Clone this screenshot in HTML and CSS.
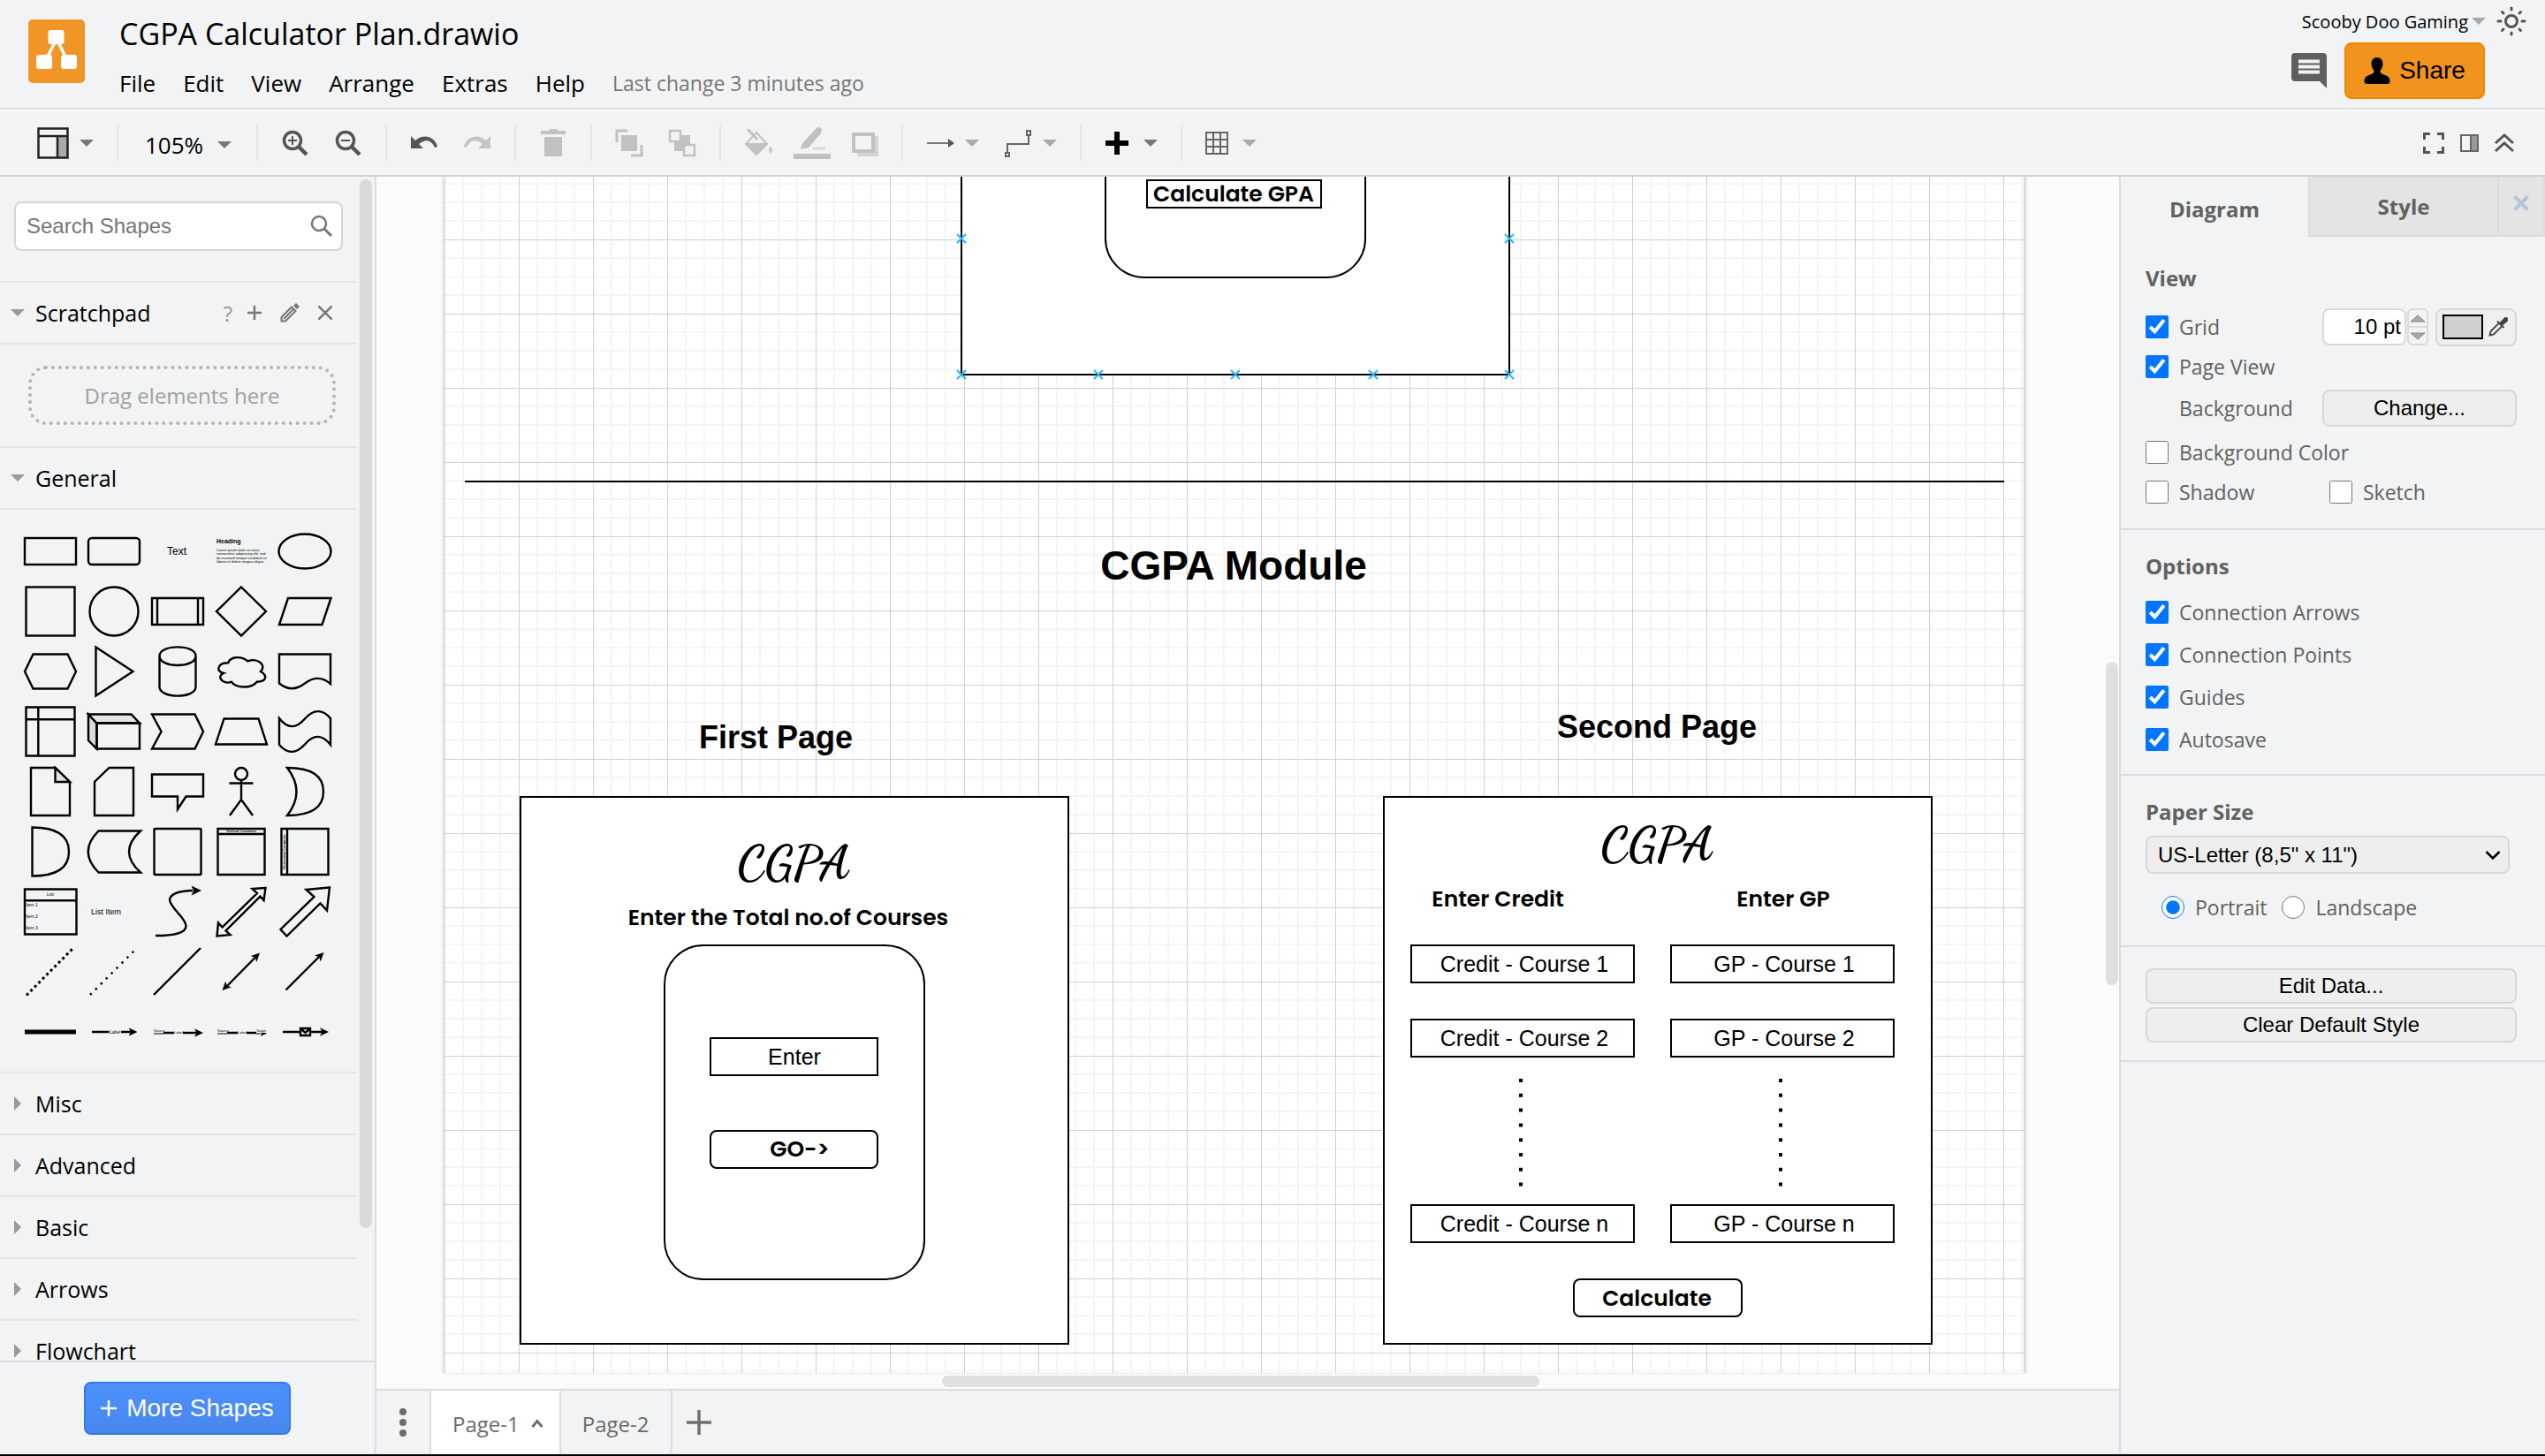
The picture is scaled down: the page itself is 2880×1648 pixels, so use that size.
FILE: index.html
```html
<!DOCTYPE html>
<html lang="en">
<head>
<meta charset="utf-8">
<title>CGPA Calculator Plan.drawio</title>
<link rel="stylesheet" href="styles.css">
</head>
<body>
<svg class="defs" aria-hidden="true">
  <defs>
    <symbol id="caret" viewBox="0 0 16 8"><path d="M0 0H16L8 8Z"/></symbol>
    <symbol id="caret-right" viewBox="0 0 8 16"><path d="M0 0L8 8L0 16Z"/></symbol>
    <marker id="head" viewBox="-10 -5 10 10" refX="0" refY="0" markerWidth="10" markerHeight="10" markerUnits="userSpaceOnUse" orient="auto-start-reverse"><path d="M0 0L-10-4.800L-7.500 0L-10 4.800Z" fill="#000" stroke="none"/></marker>
  </defs>
</svg>
<div class="app">
  <header class="header">
    <svg class="logo" viewBox="0 0 64 72" role="img" aria-label="draw.io"><rect width="64" height="72" rx="5" fill="#f29527"/><path d="M32 22L20 46M32 22L44 46" stroke="#fff" stroke-width="3.500"/><rect x="22.500" y="12" width="18" height="16" rx="3" fill="#fff"/><rect x="9" y="40" width="18" height="16" rx="3" fill="#fff"/><rect x="37" y="40" width="18" height="16" rx="3" fill="#fff"/></svg>
    <div class="heading">
      <h1 class="title">CGPA Calculator Plan.drawio</h1>
      <nav class="menubar">
        <a href="#">File</a><a href="#">Edit</a><a href="#">View</a><a href="#">Arrange</a><a href="#">Extras</a><a href="#">Help</a>
        <span class="status">Last change 3 minutes ago</span>
      </nav>
    </div>
    <div class="account">
      <div class="account-row">
        <button class="user">Scooby Doo Gaming <svg class="caret" width="16" height="8"><use href="#caret"/></svg></button>
        <button class="plain" aria-label="Appearance"><svg width="34" height="34" viewBox="-17 -17 34 34" fill="none" stroke="#555" stroke-width="3" stroke-linecap="round"><circle r="6.500"/><path d="M0-15V-13M0 13V15M-15 0H-12M12 0H15M-10.500-10.500L-9-9M10.500-10.500L9-9M-10.500 10.500L-9 9M10.500 10.500L9 9"/></svg></button>
      </div>
      <div class="share-row">
        <button class="plain" aria-label="Comments"><svg width="40" height="40" viewBox="0 0 40 40"><path d="M4 0H36Q40 0 40 4V40L32 32H4Q0 32 0 28V4Q0 0 4 0Z" fill="#5f5f61"/><path d="M8 9.500H32M8 15.500H32M8 21.500H32" stroke="#f1f3f4" stroke-width="4"/></svg></button>
        <button class="share"><svg width="30" height="30" viewBox="0 0 30 30"><path d="M15 0C19 0 21.500 3 21.500 7C21.500 11 20 13 18.500 15C18.500 18 20 18.500 24 20C28 21.500 29.500 23 29.500 28Q29 30 26 30H4Q1 30 .5 28C.5 23 2 21.500 6 20C10 18.500 11.500 18 11.500 15C10 13 8.500 11 8.500 7C8.500 3 11 0 15 0Z"/></svg>Share</button>
      </div>
    </div>
  </header>

  <div class="toolbar">
    <div class="group">
      <button class="plain" aria-label="View"><svg width="36" height="36" viewBox="0 0 36 36"><rect x="24" y="10" width="11" height="24" fill="#aaa"/><path d="M1.500 1.500H34.500V34.500H1.500ZM1.500 10H34.500M23 10V34.500" fill="none" stroke="#222" stroke-width="2.500"/></svg><svg class="caret dark" width="16" height="8"><use href="#caret"/></svg></button>
    </div>
    <div class="group">
      <button class="zoom">105% <svg class="caret dark" width="16" height="8"><use href="#caret"/></svg></button>
    </div>
    <div class="group">
      <button class="plain" aria-label="Zoom In"><svg width="32" height="32" viewBox="0 0 32 32" fill="none" stroke="#555"><circle cx="13" cy="13" r="9.500" stroke-width="3.500"/><path d="M20 20L29 29" stroke-width="4.500"/><path d="M8 13H18M13 8V18" stroke-width="2"/></svg></button>
      <button class="plain" aria-label="Zoom Out"><svg width="32" height="32" viewBox="0 0 32 32" fill="none" stroke="#555"><circle cx="13" cy="13" r="9.500" stroke-width="3.500"/><path d="M20 20L29 29" stroke-width="4.500"/><path d="M8 13H18" stroke-width="2"/></svg></button>
    </div>
    <div class="group">
      <button class="plain" aria-label="Undo"><svg width="32" height="32" viewBox="0 0 32 32"><path d="M1 8V22H15L10 17C17 11 24 12 28 21L31 20C28 8 15 5 6 13Z" fill="#555"/></svg></button>
      <button class="plain" aria-label="Redo" disabled><svg width="32" height="32" viewBox="0 0 32 32"><path d="M31 8V22H17L22 17C15 11 8 12 4 21L1 20C4 8 17 5 26 13Z" fill="#c3c4c5"/></svg></button>
    </div>
    <div class="group">
      <button class="plain" aria-label="Delete" disabled><svg width="32" height="32" viewBox="0 0 32 32" fill="#c0c1c2"><path d="M2 2H11L13 0H20L22 2H30V6H2ZM6 9H26V31H6Z"/></svg></button>
    </div>
    <div class="group">
      <button class="plain" aria-label="To Front" disabled><svg width="32" height="32" viewBox="0 0 32 32"><rect x="7" y="7" width="18" height="18" fill="#c0c1c2"/><path d="M14 2H2V15M18 30H30V18" fill="none" stroke="#c0c1c2" stroke-width="3"/></svg></button>
      <button class="plain" aria-label="To Back" disabled><svg width="32" height="32" viewBox="0 0 32 32"><path d="M15 7H25V17H15ZM7 15H17V25H7Z" fill="#c0c1c2"/><path d="M2 2H14V14H2ZM18 18H30V30H18Z" fill="#f1f3f4" stroke="#c0c1c2" stroke-width="2.500"/></svg></button>
    </div>
    <div class="group">
      <button class="plain" aria-label="Fill Color" disabled><svg width="32" height="32" viewBox="0 0 32 32"><path d="M14 4L26 17L14 29L2 17Z" fill="none" stroke="#c0c1c2" stroke-width="2"/><path d="M2 16H26L14 29Z" fill="#c0c1c2"/><path d="M4 0L15 12" stroke="#c0c1c2" stroke-width="3"/><path d="M30 19Q34 25 30 27.500Q26 25 30 19Z" fill="#c8c9ca"/></svg></button>
      <button class="plain" aria-label="Line Color" disabled><svg class="spill" width="32" height="38" viewBox="0 0 32 38"><path d="M4 26L6 19L22 2Q26-1 28 4L27 8L13 24Z" fill="#c0c1c2"/><path d="M18 25H32" stroke="#d8d9da" stroke-width="3"/><path d="M-4 34H38" stroke="#c0c1c2" stroke-width="6"/></svg></button>
      <button class="plain" aria-label="Shadow" disabled><svg width="32" height="32" viewBox="0 0 32 32"><path d="M8 8H32V31H8Z" fill="#d2d3d4"/><path d="M4 6H26V25H4Z" fill="#f1f3f4" stroke="#c0c1c2" stroke-width="4"/></svg></button>
    </div>
    <div class="group">
      <button class="plain" aria-label="Connection"><svg width="32" height="32" viewBox="0 0 32 32"><path d="M1 16H27" stroke="#777" stroke-width="2"/><path d="M25 11L32 16L25 21Z" fill="#555"/></svg><svg class="caret" width="16" height="8"><use href="#caret"/></svg></button>
      <button class="plain" aria-label="Waypoints"><svg width="32" height="32" viewBox="0 0 32 32" fill="none" stroke="#666" stroke-width="2"><path d="M4 27V17H28V7M2 27H6V31H2ZM26 2H30V7H26Z"/></svg><svg class="caret" width="16" height="8"><use href="#caret"/></svg></button>
    </div>
    <div class="group">
      <button class="plain" aria-label="Insert"><svg width="32" height="32" viewBox="0 0 32 32"><path d="M14 3V29M1 16H27" stroke="#000" stroke-width="6"/></svg><svg class="caret dark" width="16" height="8"><use href="#caret"/></svg></button>
    </div>
    <div class="group last">
      <button class="plain" aria-label="Table"><svg width="26" height="26" viewBox="0 0 26 26"><path d="M1 1H25V25H1ZM9 1V25M17 1V25M1 9H25M1 17H25" fill="none" stroke="#666" stroke-width="2"/></svg><svg class="caret" width="16" height="8"><use href="#caret"/></svg></button>
    </div>
    <div class="toolbar-end">
      <button class="plain" aria-label="Fullscreen"><svg width="24" height="24" viewBox="0 0 24 24" fill="none" stroke="#555" stroke-width="3"><path d="M1.500 8V1.500H8M16 1.500H22.500V8M22.500 16V22.500H16M8 22.500H1.500V16"/></svg></button>
      <button class="plain" aria-label="Format"><svg width="24" height="24" viewBox="0 0 24 24"><path d="M14 2H22V22H14Z" fill="#999"/><path d="M3 3H22V21H3ZM14 3V21" fill="none" stroke="#666" stroke-width="2"/></svg></button>
      <button class="plain" aria-label="Collapse"><svg width="24" height="24" viewBox="0 0 24 24" fill="none" stroke="#555" stroke-width="3"><path d="M2 12L12 3L22 12M2 21L12 12L22 21"/></svg></button>
    </div>
  </div>

  <div class="workspace">
    <aside class="sidebar">
      <div class="palettes">
        <div class="search">
          <input type="text" placeholder="Search Shapes" aria-label="Search Shapes">
          <svg class="search-icon" width="26" height="26" viewBox="0 0 26 26" fill="none" stroke="#777"><circle cx="10" cy="10" r="8" stroke-width="2.500"/><path d="M15.500 15.500L24 24" stroke-width="3"/></svg>
        </div>
        <div class="section open">
          <svg class="fold" width="16" height="8"><use href="#caret"/></svg><h2>Scratchpad</h2>
          <span class="tools">
            <button class="plain hint" aria-label="Help">?</button>
            <button class="plain" aria-label="Add"><svg width="16" height="16" viewBox="0 0 16 16"><path d="M8 0V16M0 8H16" stroke="#777" stroke-width="2.500"/></svg></button>
            <button class="plain" aria-label="Edit"><svg width="22" height="22" viewBox="0 0 22 22"><path d="M1.500 20.500V16L13 4.500L17.500 9L6 20.500ZM4 18L15 7" fill="none" stroke="#777" stroke-width="2"/><path d="M15 3L18 0L22 4L19 7Z" fill="#777"/></svg></button>
            <button class="plain" aria-label="Close"><svg width="16" height="16" viewBox="0 0 16 16"><path d="M0 0L16 16M16 0L0 16" stroke="#777" stroke-width="2.500"/></svg></button>
          </span>
        </div>
        <div class="scratch"><div class="drop">Drag elements here</div></div>
        <div class="section open"><svg class="fold" width="16" height="8"><use href="#caret"/></svg><h2>General</h2></div>
        <div class="shapes">
          <button aria-label="Rectangle"><svg viewBox="-36 -34 72 68"><rect x="-29" y="-15" width="58" height="30"/></svg></button>
          <button aria-label="Rounded Rectangle"><svg viewBox="-36 -34 72 68"><rect x="-29" y="-15" width="58" height="30" rx="4"/></svg></button>
          <button aria-label="Text"><svg viewBox="-36 -34 72 68"><text class="t12" x="-1" y="4" text-anchor="middle">Text</text></svg></button>
          <button aria-label="Textbox"><svg viewBox="-36 -34 72 68"><text class="t7" x="-28" y="-9">Heading</text><g class="t4"><text x="-28" y="0">Lorem ipsum dolor sit amet,</text><text x="-28" y="4">consectetur adipisicing elit, sed</text><text x="-28" y="9">do eiusmod tempor incididunt ut</text><text x="-28" y="13">labore et dolore magna aliqua.</text></g></svg></button>
          <button aria-label="Ellipse"><svg viewBox="-36 -34 72 68"><ellipse rx="29.500" ry="19.500"/></svg></button>

          <button aria-label="Square"><svg viewBox="-36 -34 72 68"><rect x="-27.500" y="-27.500" width="55" height="55"/></svg></button>
          <button aria-label="Circle"><svg viewBox="-36 -34 72 68"><circle r="27.500"/></svg></button>
          <button aria-label="Process"><svg viewBox="-36 -34 72 68"><path d="M-29-15H29V15H-29ZM-23-15V15M23-15V15"/></svg></button>
          <button aria-label="Diamond"><svg viewBox="-36 -34 72 68"><path d="M0-27.500L28 0L0 27.500L-28 0Z"/></svg></button>
          <button aria-label="Parallelogram"><svg viewBox="-36 -34 72 68"><path d="M-29 15L-19-15H29.500L19.500 15Z"/></svg></button>

          <button aria-label="Hexagon"><svg viewBox="-36 -34 72 68"><path d="M-29 0L-19.500-19.500H19.500L29 0L19.500 19.500H-19.500Z"/></svg></button>
          <button aria-label="Triangle"><svg viewBox="-36 -34 72 68"><path d="M-20.500-27.500L21.500 0L-20.500 27.500Z"/></svg></button>
          <button aria-label="Cylinder"><svg viewBox="-36 -34 72 68"><path d="M-20.500-17.500C-20.500-31 20.500-31 20.500-17.500V17.500C20.500 31-20.500 31-20.500 17.500ZM-20.500-17.500C-20.500-3.500 20.500-3.500 20.500-17.500"/></svg></button>
          <button aria-label="Cloud"><svg viewBox="-36 -34 72 68"><path d="M-14.800-9.800C-26.500-9.800-29.500 0-20 2C-29.500 6.200-19 15.600-11.200 11.700C-6 19.500 12 19.500 17.700 11.700C29.500 11.700 29.500 4 22 0C29.500-7.800 17.700-15.600 7.400-11.700C0-17.500-12-17.500-14.800-9.800Z"/></svg></button>
          <button aria-label="Document"><svg viewBox="-36 -34 72 68"><path d="M-29-19.500H29V14Q15 2 0 13.500Q-15 25-29 13.500Z"/></svg></button>

          <button aria-label="Internal Storage"><svg viewBox="-36 -34 72 68"><path d="M-27.500-27.500H27.500V27.500H-27.500ZM-13.700-27.500V27.500M-27.500-13.700H27.500"/></svg></button>
          <button aria-label="Cube"><svg viewBox="-36 -34 72 68"><path d="M-29-19.500L-19.500-9.500V19.500L-29 10Z" fill="#d9dadb"/><path d="M-29-19.500H19.500L29-9.500H-19.500Z" fill="#e6e6e7"/><path d="M-19.500-9.500H29V19.500H-19.500Z"/></svg></button>
          <button aria-label="Step"><svg viewBox="-36 -34 72 68"><path d="M-29-19.500H19.500L29 0L19.500 19.500H-29L-18.500 0Z"/></svg></button>
          <button aria-label="Trapezoid"><svg viewBox="-36 -34 72 68"><path d="M-29 14.500L-19.500-14.500H19.500L29 14.500Z"/></svg></button>
          <button aria-label="Tape"><svg viewBox="-36 -34 72 68"><path d="M-29-15Q-15 3 0-14.500Q15-31 29-15V15Q15-3 0 14.500Q-15 31-29 15Z"/></svg></button>

          <button aria-label="Note"><svg viewBox="-36 -34 72 68"><path d="M-22-27H5.500L22-11V27H-22Z"/><path d="M5.500-27V-11H22Z" fill="#e3e4e5"/></svg></button>
          <button aria-label="Card"><svg viewBox="-36 -34 72 68"><path d="M-5.500-27H22V27H-22V-11Z"/></svg></button>
          <button aria-label="Callout"><svg viewBox="-36 -34 72 68"><path d="M-29-19.500H29V5.500H9.500L0 20V5.500H-29Z"/></svg></button>
          <button aria-label="Actor"><svg viewBox="-36 -34 72 68"><circle cy="-20" r="7"/><path d="M0-13V9M-13.500-9.500H13.500M-13 27L0 9L13 27"/></svg></button>
          <button aria-label="Or"><svg viewBox="-36 -34 72 68"><path d="M-20-27Q21-27 21 0Q21 27-20 27Q1 0-20-27Z"/></svg></button>

          <button aria-label="And"><svg viewBox="-36 -34 72 68"><path d="M-20.500-27.500Q21-27.500 21 0Q21 27.500-20.500 27.500Z"/></svg></button>
          <button aria-label="Data Storage"><svg viewBox="-36 -34 72 68"><path d="M-17.500-23.500H30Q4 0 30 23.500H-17.500Q-41 0-17.500-23.500Z"/></svg></button>
          <button aria-label="Container"><svg viewBox="-36 -34 72 68"><rect x="-26.500" y="-26" width="53" height="52" rx="1"/></svg></button>
          <button aria-label="Vertical Container"><svg viewBox="-36 -34 72 68"><path d="M-26.500-26H26.500V26H-26.500ZM-26.500-20H26.500"/><text class="t4 dark" y="-22" text-anchor="middle">Vertical Container</text></svg></button>
          <button aria-label="Horizontal Container"><svg viewBox="-36 -34 72 68"><path d="M-26.500-26H26.500V26H-26.500ZM-20-26V26"/><text class="t4 dark" transform="translate(-22 0) rotate(-90)" text-anchor="middle">Horizontal Container</text></svg></button>

          <button aria-label="List"><svg viewBox="-36 -34 72 68"><path d="M-29-25.500H29.500V25.500H-29ZM-29-12.700H29.500"/><g class="t5"><text y="-18" text-anchor="middle">List</text><text x="-28" y="-6">Item 1</text><text x="-28" y="7">Item 2</text><text x="-28" y="20">Item 3</text></g></svg></button>
          <button aria-label="List Item"><svg viewBox="-36 -34 72 68"><text class="t9" x="-26" y="3">List Item</text></svg></button>
          <button aria-label="Curve"><svg viewBox="-36 -34 72 68"><path d="M-25 27Q9.500 27 9.500 16Q9 11 1 2Q-9-9-9-14Q-7-23.500 17-24"/><path d="M27-24L15.500-29.500L18-24L15.500-18.500Z" fill="#000" stroke="none"/></svg></button>
          <button aria-label="Bidirectional Arrow"><svg viewBox="-36 -34 72 68"><path d="M27.500-27L12.500-26L18-21L-21.500 17.500L-26 12.500L-27.500 27.500L-12.500 26L-17.500 21.500L21.500-17.500L25.500-13Z"/></svg></button>
          <button aria-label="Arrow"><svg viewBox="-36 -34 72 68"><path d="M28-27.500L1.500-25L10.500-17L-27.500 20L-20.500 27.500L17.500-9.500L25-1.500Z"/></svg></button>

          <button aria-label="Dashed Line"><svg viewBox="-36 -34 72 68"><path class="dashed" d="M-27 26.500L25-26"/></svg></button>
          <button aria-label="Dotted Line"><svg viewBox="-36 -34 72 68"><path d="M-27 26L23-24" stroke-dasharray="2.400 6"/></svg></button>
          <button aria-label="Line"><svg viewBox="-36 -34 72 68"><path d="M-27 26L26-27"/></svg></button>
          <button aria-label="Bidirectional Connector"><svg viewBox="-36 -34 72 68"><path d="M-16.500 16.500L16-16.500"/><path d="M-21.500 21L21-21.500" stroke="none" marker-start="url(#head)" marker-end="url(#head)"/></svg></button>
          <button aria-label="Directional Connector"><svg viewBox="-36 -34 72 68"><path d="M-21.500 20.500L16-17"/><path d="M-21.500 20.500L21.500-22" stroke="none" marker-end="url(#head)"/></svg></button>

          <button aria-label="Link"><svg viewBox="-36 -34 72 68"><path d="M-29 0H29" stroke-width="5"/></svg></button>
          <button aria-label="Connector with Label"><svg viewBox="-36 -34 72 68"><path d="M-25 0H-5.500M8 0H20"/><path d="M8 0H26.500" stroke="none" marker-end="url(#head)"/><text class="t5" x="1" y="2" text-anchor="middle">Label</text></svg></button>
          <button aria-label="Connector with 2 Labels"><svg viewBox="-36 -34 72 68"><path d="M-16 1H-4M6 1H22"/><path d="M-27 2H-16" stroke-width="1"/><path d="M6 1H29" stroke="none" marker-end="url(#head)"/><g class="t4"><text x="-27" y="0">Source</text><text x="-4" y="2">Label</text></g></svg></button>
          <button aria-label="Connector with 3 Labels"><svg viewBox="-36 -34 72 68"><path d="M-16 1H-4M6 1H17"/><path d="M-27 2H-16M17 2H28" stroke-width="1"/><path d="M22 5L29 1L24 1Z" fill="#000" stroke="none"/><g class="t4"><text x="-27" y="0">Source</text><text x="-4" y="2">Label</text><text x="17" y="0">Target</text></g></svg></button>
          <button aria-label="Connector with Symbol"><svg viewBox="-36 -34 72 68"><path d="M-25 0H-5M7 0H20M-5-4H6V4H-5ZM-4-3L.5 1L5-3"/><path d="M7 0H27" stroke="none" marker-end="url(#head)"/></svg></button>
        </div>
        <div class="section"><svg class="fold" width="8" height="16"><use href="#caret-right"/></svg><h2>Misc</h2></div>
        <div class="section"><svg class="fold" width="8" height="16"><use href="#caret-right"/></svg><h2>Advanced</h2></div>
        <div class="section"><svg class="fold" width="8" height="16"><use href="#caret-right"/></svg><h2>Basic</h2></div>
        <div class="section"><svg class="fold" width="8" height="16"><use href="#caret-right"/></svg><h2>Arrows</h2></div>
        <div class="section"><svg class="fold" width="8" height="16"><use href="#caret-right"/></svg><h2>Flowchart</h2></div>
        <div class="thumb side-thumb"></div>
      </div>
      <div class="more"><button class="more-shapes"><svg width="18" height="18" viewBox="0 0 18 18"><path d="M9 0V18M0 9H18" stroke="#fff" stroke-width="2.500"/></svg>More Shapes</button></div>
    </aside>

    <main class="editor">
      <div class="canvas">
        <div class="page">
          <svg class="diagram" width="1788" height="1354" viewBox="502 200 1788 1354">
            <g class="shape">
              <rect x="1088" y="150" width="620" height="274"/>
              <rect x="1251" y="150" width="294" height="164" rx="44"/>
              <rect x="1298" y="204" width="197" height="31"/>
              <path d="M526 545H2268"/>
              <rect x="589" y="902" width="620" height="619"/>
              <rect x="752" y="1070" width="294" height="378" rx="44"/>
              <rect x="804" y="1175" width="189" height="42"/>
              <rect x="804" y="1280" width="189" height="42" rx="7"/>
              <rect x="1566" y="902" width="620" height="619"/>
              <rect x="1597" y="1070" width="252" height="42"/>
              <rect x="1891" y="1070" width="252" height="42"/>
              <rect x="1597" y="1154" width="252" height="42"/>
              <rect x="1891" y="1154" width="252" height="42"/>
              <rect x="1597" y="1364" width="252" height="42"/>
              <rect x="1891" y="1364" width="252" height="42"/>
              <rect x="1781" y="1448" width="190" height="42" rx="7"/>
            </g>
            <path class="dots" d="M1721 1221V1345M2015 1221V1345"/>
            <path class="points" d="M1083 265l10 10m0-10l-10 10M1703 265l10 10m0-10l-10 10M1083 419l10 10m0-10l-10 10M1238 419l10 10m0-10l-10 10M1393 419l10 10m0-10l-10 10M1549 419l10 10m0-10l-10 10M1703 419l10 10m0-10l-10 10"/>
            <g class="caption">
              <text x="1396" y="228">Calculate GPA</text>
              <text x="892" y="1047">Enter the Total no.of Courses</text>
              <text x="905" y="1309">GO-&gt;</text>
              <text x="1695" y="1026">Enter Credit</text>
              <text x="2018" y="1026">Enter GP</text>
              <text x="1875" y="1478">Calculate</text>
            </g>
            <text class="module" x="1396" y="656">CGPA Module</text>
            <g class="page-name">
              <text x="878" y="847">First Page</text>
              <text x="1875" y="835">Second Page</text>
            </g>
            <g class="script">
              <text x="898" y="994">CGPA</text>
              <text x="1875" y="973">CGPA</text>
            </g>
            <g class="field">
              <text x="899" y="1205">Enter</text>
              <text x="1725" y="1100">Credit - Course 1</text>
              <text x="2019" y="1100">GP - Course 1</text>
              <text x="1725" y="1184">Credit - Course 2</text>
              <text x="2019" y="1184">GP - Course 2</text>
              <text x="1725" y="1394">Credit - Course n</text>
              <text x="2019" y="1394">GP - Course n</text>
            </g>
          </svg>
        </div>
        <div class="thumb v-thumb"></div>
        <div class="thumb h-thumb"></div>
      </div>
      <div class="tabs">
        <button class="tab menu" aria-label="Pages"><svg width="8" height="32" viewBox="0 0 8 32" fill="#6b6b6b"><circle cx="4" cy="4" r="4"/><circle cx="4" cy="16" r="4"/><circle cx="4" cy="28" r="4"/></svg></button>
        <button class="tab active">Page-1 <svg width="14" height="10" viewBox="0 0 14 10"><path d="M1.500 9L7 2.500L12.500 9" fill="none" stroke="#6b6b6b" stroke-width="3"/></svg></button>
        <button class="tab">Page-2</button>
        <button class="tab add" aria-label="Insert Page"><svg width="28" height="28" viewBox="0 0 28 28"><path d="M14 0V28M0 14H28" stroke="#6f6f70" stroke-width="3.500"/></svg></button>
      </div>
    </main>

    <aside class="format">
      <div class="format-tabs">
        <button class="ftab active">Diagram</button>
        <button class="ftab">Style</button>
        <button class="ftab close" aria-label="Close"><svg width="18" height="18" viewBox="0 0 18 18"><path d="M1.500 1.500L16.500 16.500M16.500 1.500L1.500 16.500" stroke="#b3c4d9" stroke-width="4"/></svg></button>
      </div>
      <section class="view">
        <h3>View</h3>
        <div class="row r48">
          <label><input type="checkbox" checked>Grid</label>
          <div class="grid-size">
            <input type="text" value="10 pt" aria-label="Grid size">
            <span class="spinner"><button aria-label="Increase"><svg width="18" height="9" viewBox="0 0 18 9"><path d="M1 8H17L9 1Z" fill="#aaa" stroke="#888"/></svg></button><button aria-label="Decrease"><svg width="18" height="9" viewBox="0 0 18 9"><path d="M1 1H17L9 8Z" fill="#aaa" stroke="#888"/></svg></button></span>
            <button class="color" aria-label="Grid color"><span class="swatch"></span><svg width="22" height="22" viewBox="0 0 22 22"><path d="M1.500 20.500L2.500 16L12 6.500L15.500 10L6 19.500Z" fill="none" stroke="#444" stroke-width="1.800"/><path d="M10 4.500L17.500 12M13 7L18 2Q20-.5 21 1.500Q22.500 2.500 20.500 4.500L15 9" fill="#444" stroke="#444" stroke-width="1.800"/></svg></button>
          </div>
        </div>
        <div class="row r42"><label><input type="checkbox" checked>Page View</label></div>
        <div class="row r52"><span class="indent">Background</span><button class="btn change">Change...</button></div>
        <div class="row r48"><label><input type="checkbox">Background Color</label></div>
        <div class="row r42 pair"><label><input type="checkbox">Shadow</label><label><input type="checkbox">Sketch</label></div>
      </section>
      <section class="options">
        <h3>Options</h3>
        <div class="row r48"><label><input type="checkbox" checked>Connection Arrows</label></div>
        <div class="row r48"><label><input type="checkbox" checked>Connection Points</label></div>
        <div class="row r48"><label><input type="checkbox" checked>Guides</label></div>
        <div class="row r48"><label><input type="checkbox" checked>Autosave</label></div>
      </section>
      <section class="paper">
        <h3 id="paper-size">Paper Size</h3>
        <div class="select">
          <select aria-labelledby="paper-size"><option>US-Letter (8,5" x 11")</option></select>
          <svg width="18" height="12" viewBox="0 0 18 12"><path d="M1.500 2L9 9.500L16.500 2" fill="none" stroke="#000" stroke-width="2.500"/></svg>
        </div>
        <div class="row r48 radios"><label><input type="radio" name="orientation" checked>Portrait</label><label><input type="radio" name="orientation">Landscape</label></div>
      </section>
      <section class="actions">
        <button class="btn">Edit Data...</button>
        <button class="btn">Clear Default Style</button>
      </section>
    </aside>
  </div>
</div>
</body>
</html>
```
FILE: styles.css
```css
* { box-sizing: border-box; }
body { margin: 0; font-family: "Open Sans", "Noto Sans", sans-serif; font-size: 24px; color: #000; background: #f1f3f4; }
button, input, select { font: inherit; color: inherit; margin: 0; }
button { cursor: pointer; padding: 0; border: 0; background: none; }
h1, h2, h3 { margin: 0; font-weight: 400; }
.defs { position: absolute; width: 0; height: 0; }
.app { display: flex; flex-direction: column; height: 100vh; border-bottom: 2px solid #000; overflow: hidden; }
.plain { display: inline-flex; align-items: center; gap: 12px; }
.spill { overflow: visible; }
.caret { fill: #a9aaab; flex: none; }
.caret.dark { fill: #777; }

/* Title, menus and account */
.header { display: flex; height: 124px; border-bottom: 2px solid #dadce0; flex: none; }
.logo { width: 64px; height: 72px; margin: 22px 39px 0 32px; flex: none; }
.heading { padding-top: 14px; }
.title { font-size: 34px; line-height: 48px; white-space: nowrap; }
.menubar { display: flex; align-items: center; gap: 31px; margin-top: 14px; font-size: 26px; line-height: 36px; white-space: nowrap; }
.menubar a { color: #000; text-decoration: none; }
.status { font-size: 23px; color: #777; }
.account { margin-left: auto; display: flex; flex-direction: column; align-items: flex-end; }
.account-row { display: flex; align-items: center; gap: 12px; height: 48px; padding-right: 21px; }
.user { display: flex; align-items: center; gap: 4px; font-size: 20px; }
.share-row { display: flex; align-items: center; gap: 20px; padding-right: 68px; }
.share { display: flex; align-items: center; justify-content: center; gap: 10px; width: 159px; height: 64px; background: #f2931e; border: 2px solid #f08705; border-radius: 8px; font-family: "Liberation Sans", Arial, sans-serif; font-size: 28px; }

/* Toolbar */
.toolbar { display: flex; align-items: center; height: 76px; flex: none; padding: 0 34px 0 16px; border-top: 2px solid #fff; border-bottom: 2px solid #cfd1d3; }
.group { display: flex; align-items: center; gap: 28px; height: 40px; padding: 0 26px; border-right: 2px solid #e2e4e6; }
.group.last { border: 0; }
.group.last .plain { gap: 16px; }
.zoom { display: flex; align-items: center; gap: 16px; font-size: 26px; padding: 4px 2px 0 4px; }
.toolbar-end { margin-left: auto; display: flex; gap: 16px; }

.workspace { display: flex; flex: 1; min-height: 0; }

/* Shape palettes */
.sidebar { display: flex; flex-direction: column; width: 426px; flex: none; border-right: 2px solid #dadce0; }
.palettes { position: relative; flex: 1; min-height: 0; overflow: hidden; padding-right: 20px; }
.search { position: relative; height: 120px; padding: 28px 16px 0; border-bottom: 2px solid #e3e5e7; }
.search input { width: 100%; height: 56px; padding: 0 48px 0 12px; border: 2px solid #d5d5d5; border-radius: 8px; background: #fff; font-family: "Liberation Sans", Arial, sans-serif; }
.search input::placeholder { color: #757575; }
.search-icon { position: absolute; right: 27px; top: 43px; }
.section { display: flex; align-items: center; height: 70px; padding: 0 28px 0 12px; border-bottom: 2px solid #e3e5e7; }
.section h2 { font-size: 25px; line-height: 32px; font-weight: 500; margin-left: 12px; }
.fold { flex: none; fill: #999; }
.section:not(.open) .fold { margin: 0 4px; }
.tools { margin-left: auto; display: flex; align-items: center; gap: 21px; }
.tools .hint { color: #999; margin-right: -4px; }
.scratch { padding: 24px 24px 24px 32px; height: 117px; border-bottom: 2px solid #e3e5e7; }
.drop { display: flex; align-items: center; justify-content: center; height: 67px; border: 4px dotted #b4b4b4; border-radius: 20px; color: #a0a0a0; }
.shapes { display: grid; grid-template-columns: repeat(5, 72px); grid-auto-rows: 68px; padding: 13px 0 11px 21px; border-bottom: 2px solid #e3e5e7; }
.shapes svg { display: block; width: 72px; height: 68px; fill: none; stroke: #000; stroke-width: 2.4; }
.shapes .dashed { stroke-width: 3; stroke-dasharray: 3 3.4; }
.shapes text { stroke: none; fill: #000; font-family: "Liberation Sans", Arial, sans-serif; }
.shapes .t12 { font-size: 12px; }
.shapes .t9 { font-size: 9px; }
.shapes .t7 { font-size: 7px; font-weight: 700; }
.shapes .t5 { font-size: 5px; }
.shapes .t4 { font-size: 4px; }
.shapes .dark { font-weight: 700; }
.more { flex: none; display: flex; justify-content: center; height: 106px; padding-top: 22px; border-top: 2px solid #dadce0; }
.more-shapes { display: flex; align-items: center; justify-content: center; gap: 11px; width: 234px; height: 60px; border: 2px solid #2f78ee; border-radius: 8px; background: linear-gradient(#4d90fe, #4787ed); color: #fff; font-family: "Liberation Sans", Arial, sans-serif; font-size: 28px; }
.thumb { position: absolute; background: #e0e0e0; border-radius: 7px; }
.side-thumb { right: 3px; top: 3px; width: 14px; bottom: 150px; background: #d8dadc; }

/* Drawing area */
.editor { flex: 1; min-width: 0; display: flex; flex-direction: column; }
.canvas { position: relative; flex: 1; min-height: 0; padding: 0 108px 18px 76px; background: #fbfbfb; }
.page {
  height: 100%; overflow: hidden; box-shadow: -1px 0 1px #d0d0d0, 3px 0 2px #dadada;
  background-color: #fff;
  background-image:
    linear-gradient(#d0d0d0 1px, transparent 1px),
    linear-gradient(90deg, #d0d0d0 1px, transparent 1px),
    linear-gradient(transparent 20px, #f5f5f5 20px 22px, transparent 22px 41px, #f5f5f5 41px 43px, transparent 43px 62px, #f5f5f5 62px 64px, transparent 64px),
    linear-gradient(90deg, transparent 20px, #f5f5f5 20px 22px, transparent 22px 41px, #f5f5f5 41px 43px, transparent 43px 62px, #f5f5f5 62px 64px, transparent 64px);
  background-size: 84px 84px;
  background-position: 1px 71px;
}
.diagram { display: block; }
.diagram text { text-anchor: middle; }
.shape { fill: #fff; stroke: #000; stroke-width: 2; }
.dots { fill: none; stroke: #000; stroke-width: 4; stroke-dasharray: 4 12.8; }
.points { fill: none; stroke: #29b6f2; stroke-width: 2; }
.caption { font-family: Poppins, Inter, sans-serif; font-weight: 600; font-size: 25px; }
.module, .page-name { font-family: "Liberation Sans", Arial, sans-serif; font-weight: 700; }
.module { font-size: 46px; }
.page-name { font-size: 36px; }
.field { font-family: "Liberation Sans", Arial, sans-serif; font-size: 25px; }
.script { font-family: "Dancing Script", Lato, cursive; font-weight: 700; font-size: 55px; }
.v-thumb { right: 1px; top: 40%; width: 14px; height: 366px; }
.h-thumb { left: 640px; bottom: 2px; width: 676px; height: 13px; }

.tabs { display: flex; flex: none; height: 74px; border-top: 2px solid #dadce0; color: #6b6b6b; }
.tab { display: flex; align-items: center; justify-content: center; gap: 13px; padding: 2px 25px 0 24px; border-right: 2px solid #dadce0; }
.tab.menu { width: 62px; padding: 0; }
.tab.active { background: #fff; padding: 2px 18px 0 24px; }
.tab.add { padding: 0 16px; border: 0; }

/* Format panel */
.format { width: 482px; flex: none; border-left: 2px solid #dadce0; color: #616161; }
.format-tabs { display: flex; height: 68px; }
.ftab { font-weight: 700; flex: 1; border: 2px solid #dadce0; border-top: 0; border-right: 0; background: #e4e4e4; padding-bottom: 0; }
.ftab.active { border: 0; background: none; padding: 4px 0 0; }
.ftab.close { flex: 0 0 54px; border-right: 2px solid #dadce0; padding-bottom: 8px; }
.format section { padding: 23px 32px 0 28px; border-bottom: 2px solid #dadce0; }
.format h3 { font-size: 24px; font-weight: 700; line-height: 36px; }
.format input[type="checkbox"], .format input[type="radio"] { width: 26px; height: 26px; margin: 0 12px 0 0; accent-color: #0075ff; }
.format .view { padding-top: 29px; padding-bottom: 20px; }
.view h3 { margin-bottom: 13px; }
.options h3 { margin-bottom: 10px; }
.format .options { padding-bottom: 15px; }
.format .paper { padding-bottom: 19px; }
.row { display: flex; align-items: center; justify-content: space-between; font-size: 23px; }
.row label { display: flex; align-items: center; }
.r48 { height: 48px; }
.r42 { height: 42px; }
.r52 { height: 52px; }
.indent { padding-left: 38px; }
.pair { display: grid; grid-template-columns: 208px 1fr; }
.grid-size { display: flex; align-items: center; font-family: "Liberation Sans", Arial, sans-serif; font-size: 24px; color: #000; }
.grid-size input { width: 95px; height: 42px; text-align: right; padding: 0 4px; border: 2px solid #dadada; border-radius: 8px; background: #fff; }
.spinner { display: flex; flex-direction: column; width: 24px; height: 42px; margin: 0 8px 0 1px; border: 2px solid #dadada; border-radius: 6px; }
.spinner button { flex: 1; display: flex; align-items: center; justify-content: center; }
.spinner button + button { border-top: 2px solid #dadada; }
.color { display: flex; align-items: center; gap: 6px; width: 92px; height: 43px; padding-left: 6px; border: 2px solid #d8d8d8; border-radius: 8px; background: #efefef; }
.swatch { width: 46px; height: 28px; border: 2px solid #000; background: #d0d0d0; }
.btn { height: 42px; border: 2px solid #d8d8d8; border-radius: 8px; background: #eee; color: #000; font-family: "Liberation Sans", Arial, sans-serif; font-size: 24px; }
.change { width: 220px; }
.select { display: grid; align-items: center; margin: 9px 8px 0 0; }
.select select { grid-area: 1 / 1; height: 43px; padding: 0 12px; appearance: none; border: 2px solid #d8d8d8; border-radius: 8px; background: #eee; color: #000; font-family: "Liberation Sans", Arial, sans-serif; }
.select svg { grid-area: 1 / 1; justify-self: end; margin-right: 10px; pointer-events: none; }
.row.radios { justify-content: flex-start; gap: 17px; margin-top: 14px; padding-left: 18px; }
.format .actions { display: flex; flex-direction: column; gap: 4px; padding-top: 24px; padding-bottom: 20px; }
.actions .btn { height: 40px; }
```
